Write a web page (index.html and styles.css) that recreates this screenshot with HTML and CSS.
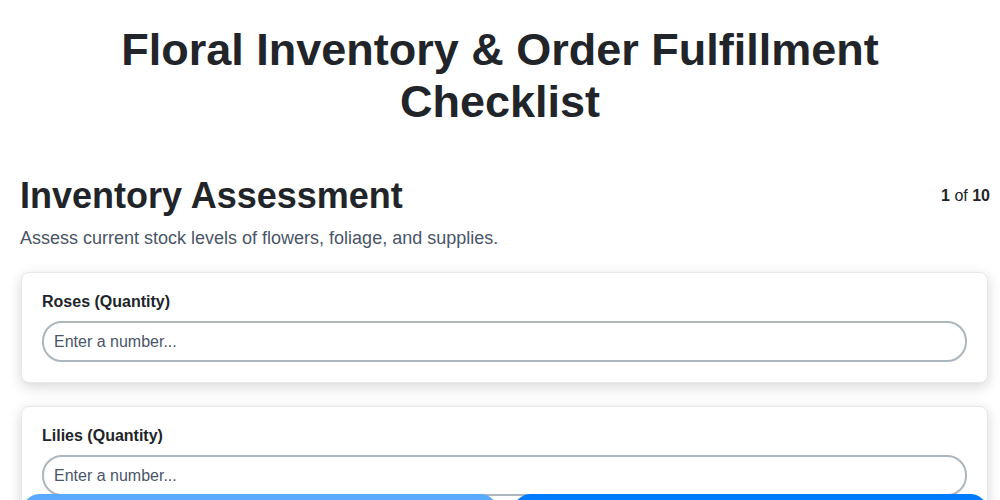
FILE: index.html
```html
<!DOCTYPE html>
<html lang="en">
<head>
    <title>Floral Inventory &amp; Order Fulfillment Checklist</title>
    <meta charset="utf-8">
    <link rel="stylesheet" href="styles.css">
</head>
<body>

    <h1 class="title">Floral Inventory &amp; Order Fulfillment Checklist</h1>

    <main class="step">
        <div class="step-header">
            <h2 class="step-title">Inventory Assessment</h2>
            <div class="step-count"><b>1</b> of <b>10</b></div>
        </div>
        <p class="step-desc">Assess current stock levels of flowers, foliage, and supplies.</p>

        <div class="card">
            <label class="field-label" for="roses">Roses (Quantity)</label>
            <input class="field-input" id="roses" type="number" placeholder="Enter a number...">
        </div>

        <div class="card">
            <label class="field-label" for="lilies">Lilies (Quantity)</label>
            <input class="field-input" id="lilies" type="number" placeholder="Enter a number...">
        </div>

        <div class="card">
            <label class="field-label" for="carnations">Carnations (Quantity)</label>
            <input class="field-input" id="carnations" type="number" placeholder="Enter a number...">
        </div>
    </main>

    <div class="nav">
        <button class="nav-btn prev" disabled>Previous</button>
        <button class="nav-btn next">Next</button>
    </div>

</body>
</html>
```

FILE: styles.css
```css
/* Checklist page */
body {
    margin: 0;
    font-family: "Liberation Sans", Arial, sans-serif;
    color: #212529;
    background: #fff;
}
.title {
    max-width: 800px;
    margin: 24px auto 0;
    font-size: 45px;
    line-height: 52px;
    text-align: center;
}
.step {
    padding: 46px 10px 80px 20px;
}
.step-header {
    display: flex;
    justify-content: space-between;
    align-items: center;
}
.step-title {
    margin: 0;
    font-size: 36px;
    line-height: 1.2;
}
.step-count {
    font-size: 16px;
}
.step-desc {
    margin: 11px 0 23px;
    font-size: 18px;
    color: #4a5568;
}
.card {
    margin: 0 2px 23px 1px;
    padding: 20px;
    background: #fff;
    border: 1px solid #e6e8eb;
    border-radius: 8px;
    box-shadow: 0 4px 14px rgba(0, 0, 0, 0.16);
}
.field-label {
    display: block;
    margin-bottom: 10px;
    font-size: 16px;
    font-weight: bold;
}
.field-input {
    display: block;
    box-sizing: border-box;
    width: 100%;
    height: 41px;
    padding: 0 10px;
    font-family: inherit;
    font-size: 16px;
    border: 2px solid #adb5bd;
    border-radius: 20px;
    outline: none;
}
.field-input::placeholder {
    color: #4a5568;
}
.nav {
    position: fixed;
    left: 22px;
    right: 12px;
    top: 494px;
    display: flex;
    gap: 15px;
}
.nav-btn {
    flex: 1;
    height: 48px;
    border: none;
    border-radius: 18px;
    font-family: inherit;
    font-size: 16px;
    color: #fff;
    background: #007bff;
}
.nav-btn.prev {
    background: #59a9ff;
}
```
